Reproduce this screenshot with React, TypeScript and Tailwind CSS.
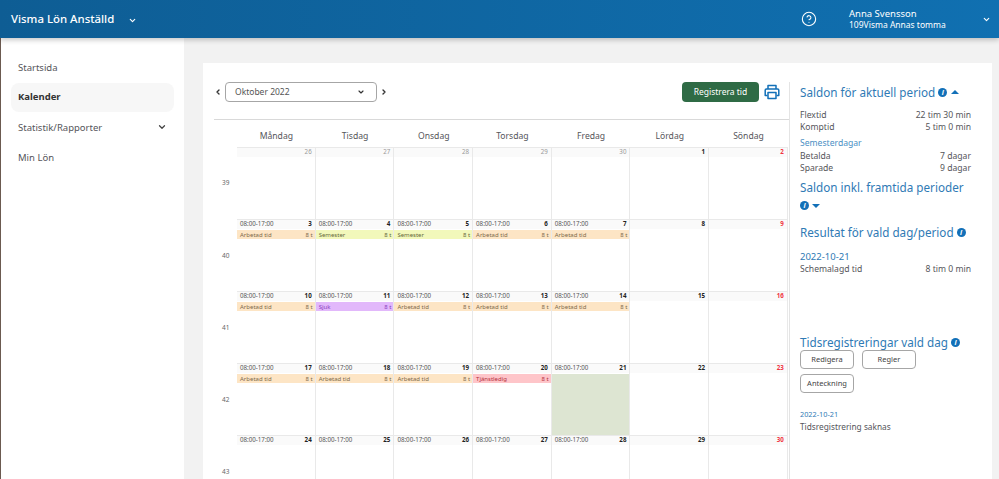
import { ChevronDown, ChevronLeft, ChevronRight, CircleHelp } from 'lucide-react'

type Entry = { label: string; cls: string }

const work: Entry = { label: 'Arbetad tid', cls: 'bg-[#fde5c5] text-[#7d6a4c]' }
const vacation: Entry = { label: 'Semester', cls: 'bg-[#f2f8bb] text-[#66693c]' }
const sick: Entry = { label: 'Sjuk', cls: 'bg-[#e2b8fb] text-[#8a3fc0]' }
const leave: Entry = { label: 'Tjänstledig', cls: 'bg-[#fec5c9] text-[#b5303c]' }

type Day = { n: number; time?: boolean; entry?: Entry; muted?: boolean; red?: boolean; selected?: boolean }

const w = (n: number, entry?: Entry, selected?: boolean): Day => ({ n, time: true, entry, selected })

const weeks: { week: number; days: Day[] }[] = [
  {
    week: 39,
    days: [
      { n: 26, muted: true },
      { n: 27, muted: true },
      { n: 28, muted: true },
      { n: 29, muted: true },
      { n: 30, muted: true },
      { n: 1 },
      { n: 2, red: true },
    ],
  },
  {
    week: 40,
    days: [w(3, work), w(4, vacation), w(5, vacation), w(6, work), w(7, work), { n: 8 }, { n: 9, red: true }],
  },
  {
    week: 41,
    days: [w(10, work), w(11, sick), w(12, work), w(13, work), w(14, work), { n: 15 }, { n: 16, red: true }],
  },
  {
    week: 42,
    days: [w(17, work), w(18, work), w(19, work), w(20, leave), w(21, undefined, true), { n: 22 }, { n: 23, red: true }],
  },
  {
    week: 43,
    days: [w(24), w(25), w(26), w(27), w(28), { n: 29 }, { n: 30, red: true }],
  },
]

const dayNames = ['Måndag', 'Tisdag', 'Onsdag', 'Torsdag', 'Fredag', 'Lördag', 'Söndag']

function Info() {
  return (
    <span className="inline-flex h-[9px] w-[9px] shrink-0 items-center justify-center rounded-full bg-[#1270b8] align-middle text-[7px] font-bold italic leading-none text-white">
      i
    </span>
  )
}

function PrintIcon() {
  return (
    <svg viewBox="0 0 16 16" className="mr-[9px] ml-[5px] h-[16px] w-[16px] text-[#1270b8]" fill="none" stroke="currentColor" strokeWidth="1.5" strokeLinejoin="round">
      <path d="M4 5V1.5h8V5" />
      <path d="M3.5 11.5H1.2V6.2q0-1.2 1.2-1.2h11.2q1.2 0 1.2 1.2v5.3h-2.3" />
      <path d="M4 8.5h8v6H4z" />
    </svg>
  )
}

function Row({ left, right }: { left: string; right: string }) {
  return (
    <div className="flex h-[12px] items-center justify-between pr-[21px] text-[8.6px] leading-none text-[#55555a]">
      <span>{left}</span>
      <span>{right}</span>
    </div>
  )
}

function Title({ children }: { children: React.ReactNode }) {
  return <div className="whitespace-nowrap text-[11.7px] leading-[16px] text-[#2f7ab5]">{children}</div>
}

function OutlineButton({ label, width }: { label: string; width: string }) {
  return (
    <button className={`flex h-[19px] items-center justify-center rounded-[4px] border border-[#a6a6a6] bg-white text-[7.5px] text-[#444] ${width}`}>
      {label}
    </button>
  )
}

function Cell({ day }: { day: Day }) {
  const numCls = day.muted
    ? 'font-normal text-[#999]'
    : day.red
      ? 'font-bold text-[#f0343f]'
      : 'font-bold text-[#222]'
  return (
    <div className="flex h-[72px] flex-col border-r border-b border-[#e9e9e9]">
      <div className="flex h-[9px] shrink-0 items-center justify-between bg-[#fafafa] pr-[3px] pl-[3px] text-[6.2px] leading-none text-[#555]">
        <span>{day.time ? '08:00-17:00' : ''}</span>
        <span className={numCls}>{day.n}</span>
      </div>
      {day.entry && (
        <div className={`mt-px flex h-[9px] shrink-0 items-center justify-between pr-[2px] pl-[3px] text-[6px] leading-none ${day.entry.cls}`}>
          <span>{day.entry.label}</span>
          <span>8 t</span>
        </div>
      )}
      {day.selected && <div className="mt-px flex-1 bg-[#dde5d2]" />}
    </div>
  )
}

export default function App() {
  return (
    <div className="flex h-[479px] w-[999px] flex-col overflow-hidden bg-[#f2f2f2] font-['Noto_Sans','Open_Sans',sans-serif]">
      {/* Top bar */}
      <header className="relative z-10 flex h-[38px] shrink-0 items-center bg-gradient-to-r from-[#0e5d94] to-[#1070b1] pl-[11px] text-white shadow-[0_2px_5px_rgba(0,0,0,0.22)]">
        <span className="text-[11.4px] font-medium leading-none">Visma Lön Anställd</span>
        <ChevronDown size={9} strokeWidth={3} className="mt-[2px] ml-[14px]" />
        <div className="ml-auto flex items-center">
          <CircleHelp size={16} strokeWidth={1.6} />
          <div className="ml-[32px] w-[133px] leading-none">
            <div className="text-[9.5px]">Anna Svensson</div>
            <div className="mt-[2px] text-[8.5px]">109Visma Annas tomma</div>
          </div>
          <ChevronDown size={9} strokeWidth={3} className="mr-[8px]" />
        </div>
      </header>

      <div className="flex min-h-0 flex-1">
        <div className="w-px shrink-0 bg-[#6b5a50]" />
        {/* Sidebar */}
        <nav className="w-[183px] shrink-0 bg-white pt-[15px] pr-[10px] pl-[10px] text-[9.5px] text-[#55555a]">
          <div className="flex h-[30px] items-center pl-[7px]">Startsida</div>
          <div className="flex h-[29px] items-center rounded-[8px] bg-[#f7f7f7] pl-[7px] font-bold text-[#333]">Kalender</div>
          <div className="mt-px flex h-[30px] items-center justify-between pr-[7px] pl-[7px]">
            Statistik/Rapporter
            <ChevronDown size={10} strokeWidth={3} className="mb-[2px] text-[#444]" />
          </div>
          <div className="flex h-[30px] items-center pl-[7px]">Min Lön</div>
        </nav>

        {/* Content card */}
        <main className="mt-[25px] ml-[19px] flex h-[500px] w-[789px] shrink-0 bg-white pt-[19px] pl-[11px]">
          <section className="w-[575px] shrink-0">
            <div className="flex h-[20px] items-center">
              <ChevronLeft size={8} strokeWidth={4} className="text-[#333]" />
              <div className="ml-[3px] flex h-[20px] w-[152px] items-center justify-between rounded-[4px] border border-[#a6a6a6] pr-[11px] pl-[9px] text-[8.5px] text-[#555]">
                Oktober 2022
                <ChevronDown size={8} strokeWidth={3.5} className="text-[#333]" />
              </div>
              <ChevronRight size={8} strokeWidth={4} className="ml-[3px] text-[#333]" />
              <button className="ml-auto flex h-[20px] w-[77px] items-center justify-center rounded-[4px] bg-[#2f6b45] text-[8.5px] text-white">
                Registrera tid
              </button>
              <PrintIcon />
            </div>
            <div className="mt-[17px] border-t border-[#d9d9d9]">
              <div className="grid h-[27px] grid-cols-[23px_repeat(7,78.7px)] items-center pt-[6px] text-center text-[8.6px] text-[#55555a]">
                <span />
                {dayNames.map((d) => (
                  <span key={d}>{d}</span>
                ))}
              </div>
              {weeks.map((row, i) => (
                <div key={row.week} className="grid grid-cols-[23px_repeat(7,78.7px)]">
                  <span className="block pt-[31px] pl-[8px] text-[6.5px] leading-[10px] text-[#666]">{row.week}</span>
                  {row.days.map((day) => (
                    <div key={day.n} className={i === 0 ? 'border-t border-[#e9e9e9]' : ''}>
                      <Cell day={day} />
                    </div>
                  ))}
                </div>
              ))}
            </div>
          </section>

          {/* Right panel */}
          <aside className="w-[203px] shrink-0 border-l border-[#e4e4e4] pl-[10px]">
            <div className="flex items-center gap-[3px] pt-[2px]">
              <Title>Saldon för aktuell period</Title>
              <Info />
              <span className="ml-[1px] h-0 w-0 border-x-[4px] border-b-[4px] border-x-transparent border-b-[#1270b8]" />
            </div>
            <div className="mt-[9px]">
              <Row left="Flextid" right="22 tim 30 min" />
              <Row left="Komptid" right="5 tim 0 min" />
            </div>
            <div className="mt-[4px] h-[13px] text-[8.6px] leading-[12px] text-[#4a8fc4]">Semesterdagar</div>
            <Row left="Betalda" right="7 dagar" />
            <Row left="Sparade" right="9 dagar" />
            <div className="mt-[5px]">
              <Title>Saldon inkl. framtida perioder</Title>
              <div className="mt-[6px] flex items-center gap-[3px]">
                <Info />
                <span className="h-0 w-0 border-x-[4px] border-t-[4px] border-x-transparent border-t-[#1270b8]" />
              </div>
            </div>
            <div className="mt-[14px] flex items-center gap-[3px]">
              <Title>Resultat för vald dag/period</Title>
              <Info />
            </div>
            <div className="mt-[11px] text-[9.5px] leading-[12px] text-[#2f7ab5]">2022-10-21</div>
            <Row left="Schemalagd tid" right="8 tim 0 min" />
            <div className="mt-[59px] flex items-center gap-[3px]">
              <Title>Tidsregistreringar vald dag</Title>
              <Info />
            </div>
            <div className="flex w-[140px] flex-wrap gap-x-[8px] gap-y-[5px]">
              <OutlineButton label="Redigera" width="w-[54px]" />
              <OutlineButton label="Regler" width="w-[54px]" />
              <OutlineButton label="Anteckning" width="w-[54px]" />
            </div>
            <div className="mt-[16px] text-[7.3px] leading-[11px] text-[#2f7ab5]">2022-10-21</div>
            <div className="mt-px text-[8.3px] leading-[12px] text-[#55555a]">Tidsregistrering saknas</div>
          </aside>
        </main>
      </div>
    </div>
  )
}
